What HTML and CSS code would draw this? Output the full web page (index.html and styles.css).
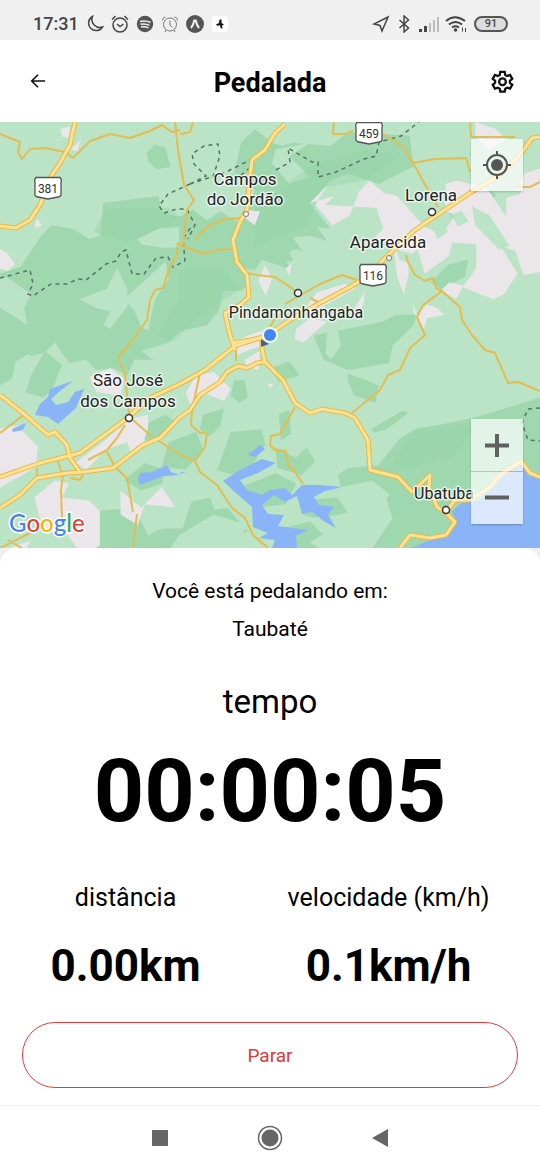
FILE: index.html
```html
<!DOCTYPE html>
<html lang="pt-BR">
<head>
<meta charset="utf-8">
<meta name="viewport" content="width=device-width, initial-scale=1">
<title>Pedalada</title>
<link rel="stylesheet" href="styles.css">
</head>
<body>
<div class="statusbar">
  <div class="status-group">
    <span class="clock">17:31</span>
    <svg class="st" viewBox="0 0 18 18"><path d="M6.500 1.500a7.500 7.500 0 1 0 10 10.500A8 8 0 0 1 6.500 1.500z"/></svg>
    <svg class="st" viewBox="0 0 18 18"><circle cx="9" cy="10" r="7"/><path d="M6 9l3 2.500L12.500 9M1 4.500L4.500 1M17 4.500L13.500 1"/></svg>
    <svg class="st" viewBox="0 0 18 18"><circle class="solid" cx="9" cy="9" r="8.200"/><path class="light" d="M4 6.500q5.500-1.500 10.500 1M4.500 9.300q4.500-1.200 9 1M5 12q4-1 7.500.800"/></svg>
    <svg class="st thin" viewBox="0 0 18 18"><circle cx="9" cy="9.500" r="6.500"/><path d="M9 5.500v4.500l2.500 2.500M1.500 5.500q0-3 3-3.500M16.500 5.500q0-3-3-3.500M5 15l-1 2M13 15l1 2"/></svg>
    <svg class="st" viewBox="0 0 18 18"><circle class="solid" cx="9" cy="9" r="9"/><path class="light bold" d="M5 13q2.500-3 3.200-7.500h1.600Q10.500 10 13 13"/></svg>
    <svg class="st" viewBox="0 0 18 18"><rect class="white" x="1" y="1" width="16" height="16" rx="4"/><path class="ink" d="M8.500 4.500l2 0 0 3.500 2.500 1.500-2 1 .500 3-1.500 0-1.500-3.500-2 1-1.500-1.500 3-1.500z"/></svg>
  </div>
  <div class="status-group right">
    <svg class="st" viewBox="0 0 18 18"><path d="M16 2L2 9l6 1.500L10 16z"/></svg>
    <svg class="st" viewBox="0 0 18 18"><path d="M4.500 5l9 8L9 17V1l4.500 4-9 8"/></svg>
    <svg class="bars" viewBox="0 0 22 18"><path class="dark" d="M1 14h3v3H1zM6 11h3v6H6z"/><path class="pale" d="M11 8h2v9h-2zM15 5h2v12h-2zM19 2h2v15h-2z"/></svg>
    <svg class="bars" viewBox="0 0 22 18"><path class="wave" d="M1 6q9-7.500 19 0M4 9.500q6.500-5 13 0M7 12.500q3.500-2.500 7 0"/><circle class="dark" cx="10.500" cy="15" r="1.800"/><path class="tick" d="M17.500 12.500v4M20.500 13v4"/></svg>
    <span class="battery">91</span>
  </div>
</div>

<header class="topbar">
  <button class="iconbtn" type="button" aria-label="Voltar"><svg viewBox="0 0 24 24"><path d="M20.500 12H4.500M12 4.500L4.500 12l7.500 7.500"/></svg></button>
  <h1>Pedalada</h1>
  <button class="iconbtn gear" type="button" aria-label="Configurações"><svg viewBox="0 0 24 24"><path d="M9.700 2h4.600l.600 3.200 1.900 1.100 3.100-1.100 2.300 4-2.500 2.100v2l2.500 2.200-2.300 3.900-3.100-1-1.900 1.100-.600 3H9.700l-.600-3-1.900-1.100-3.100 1-2.300-3.900 2.500-2.200v-2L1.800 9.200l2.300-4 3.100 1.100 1.900-1.100z"/><circle cx="12" cy="12.200" r="3.500"/></svg></button>
</header>

<section class="map" aria-label="Mapa">
  <svg class="canvas" viewBox="0 122 540 426" preserveAspectRatio="xMidYMid slice">
    <rect class="land" x="0" y="122" width="540" height="426"/>
    <g transform="translate(0 122) scale(.3444)">
      <g class="forest">
        <path d="M300 235L460 215 470 260 520 275 560 255 600 285 640 260 690 290 740 200 720 150 650 160 700 60 740 20 790 60 820 70 850 60 960 70 1010 30 1190 40 1200 130 1100 180 1010 150 960 170 900 235 960 310 920 305 950 345 900 330 850 335 880 380 870 400 830 405 850 430 760 400 740 430 700 425 725 470 700 490 650 490 635 550 600 590 520 610 490 640 410 665 445 690 390 690 370 735 330 715 280 720 250 690 200 700 160 640 130 670 90 680 60 620 0 635 0 540 50 570 80 590 70 540 90 500 20 450 0 455 0 440 60 420 120 330 150 300 210 310 260 340 290 330z"/>
        <path d="M425 90l25-25 30 10 15 55-40 8-25-25zM0 620l60 0 30 50-45 25-10 50-35 20zM130 665l50 40-30 75-25 20-50-15 15-50z"/>
        <path d="M910 620l200-40 40-20 60 0-10 30-60 60-10 50-120 20-70-30zM1010 730l40 15 50 20-10 50-60-20-20-40zM1080 890l90-52 15 8-60 45-40 12zM1250 465l50-50 60-15-10 50-70 35z"/>
        <path d="M785 715l55-20 30 40-60 20zM680 750l30 0 10 50-25 15-25-20zM590 850l60-18-10 50-30 30-30-18zM670 900l90-8 10 45-60 95-80-20zM810 850l30-15 5 70-30 20zM800 945l60 30 30-30 25 40-40 40-70-20z"/>
        <path d="M420 880l60-30 30 20-60 60-40-10zM490 930l80-30 20 50-50 60-70-10zM1010 1005l160-15-30 40-150 30-10-35zM700 1060l100-40 60 30-30 60-90 10-20-20z"/>
        <path d="M1160 920L1210 890 1300 875 1390 855 1568 800 1568 1060 1520 1020 1450 1060 1400 1130 1310 1150 1320 1210 1280 1250 1180 1278 950 1278 1010 1200 1060 1200 1130 1080 1080 1040 1080 1020z"/>
        <path d="M280 1130l110-10 40 80 60-30 30-60 90-20 20 60-110 50-40 60 110 18H260l-20-50zM360 1040l60-50 60 20-10 40-60 20zM600 1130l60-10 60 70-80 10zM700 1240l60 10 20 28H630zM870 1100l110-10 40 60-50 20-90-30zM820 1180l80-20 60 60-50 58H850zM180 1090l60 40-40 30-60-50zM1180 1278l10-40-90 10-20 30z"/>
        <path d="M1290 250l60-10 20 50-40 10zM1370 230l40-40 30 20-20 50z"/>
      </g>
      <g class="meadow">
        <path d="M400 340l60-30 60-5 0 60-50 0-60-10zM230 515l80-30 30-60 30 60 0 50-50 65-20-10 20-40-40-10-20-10zM360 515l120-110 10 50-40 60-20 90-20-10-20-50zM560 60l140 0-20 90-90 15zM800 80l100-20-60 40 60 60-60 20-50-60zM840 380q30-30 50 20l-20 40zM950 610l30-10 10 50-30 40-15-20z"/>
        <path d="M520 1200l100-60 100 30-50 70-80 10zM900 1150l90-10 130-50 20 60-60 90-120 20-60-40 50-30zM450 1180l30-90 80 0-30 90z"/>
      </g>
      <g class="deep">
        <path d="M520 430l140 0 30 60-130 90-60 60-40-20 60-110zM740 250l160-120 160-50 100 20-100 70-120 20-50 110-150 60zM310 250l180 0 40 30-160 70-100-30zM1200 900l180-20-60 90-200 50z"/>
      </g>
      <g class="town">
        <path d="M175 20l28-8-4 34-20-4zM205 80l30-30-10 35zM100 300l8-18 14 18-16 8zM0 370l20 10 24 32-20 20-24-6z"/>
        <path d="M900 235l50-50-35 55 50 60 50-28 28-70 30-32 40 35 40 10 80 90 50 20 40-55-30-10 0-80 30-10 90 20 60 90 0 30 50 50-10 20-60-20 50 80-40 60-30 15-90-35 40-55 0-70-70-5-10 40-70 50-20-70-30 20 4 50-14 60-20-50-10-90-40-20-30 10 40-40-20-60-150-10 30-25z"/>
        <path d="M1470 300l0-80 40-10 10-60 48-15v300l-48 10-30-90 -40-30zM1380 0l60 20 30 30-50 30-40-40zM1200 530l10 30 30-30 30 10 20 20-50 10-10 30-30-50zM1280 490l25-25 40 10-20 40z"/>
        <path d="M750 460l20-45 20 40-18 50zM830 425l16-15-4 40zM890 535l30-40 80-25 35 12-110 60-30 20zM670 640l90-35 10 40-80 30zM710 690l45-25-4 55-35-10zM860 600l40-30 50 10-70 60-25-10zM1030 540l30-50-5 40-10 20z"/>
        <path d="M540 785l30-50 50-10 50 50-20 35-50-20-50 30zM260 740l60-25 40 30-10 50-70-10zM380 860l50-10 0 40-20 60-30 10-10-30-60 20-60 60-30-20 90-70zM700 270l20-15 35 5-15 40zM775 760l20 0-10 12z"/>
        <path d="M0 890l50-8 60 60-5 60-105 60zM100 1090l60-50 40 10-20 40 80 10 30 30 0 100-50 30-50-70-60 0-20-60zM350 1070l60 50 60-60 40 60-90-10-20 60-50-30zM0 1245l90-30-40 60z"/>
      </g>
      <g class="land">
        <path d="M1310 270l30-12 20 30-30 15zM1370 245l50 25 60 90-30 10-70-70zM1250 290l40 0 10 30-30 20zM1150 370l40 10 0 30-30-10z"/>
      </g>
    </g>
    <g class="water">
      <path d="M540 477L528 472 519 461 499 480 480 500 462 503 452 511 456 522 447 535 430 540 412 548H540z"/>
      <path d="M260 445l5 4-10 8-7-2zM223 481L240 470 262 459 276 463 258 473 240 480 247 490 262 495 270 490 285 488 292 495 302 485 320 485 342 487 325 491 314 497 319 505 334 507 328 515 336 528 325 522 312 512 302 514 297 496 285 502 274 495 262 505 268 514 284 515 278 526 308 530 296 536 297 548H272l3-8-16-2 9-5-15-6-1-20-14-12z"/>
      <path d="M73 381L60 391 51 399 56 405 68 402 75 392 84 389 76 408 58 424 48 417 35 415 40 404 48 397 50 389zM12 429l14-6-3 7-10 2zM140 473l12-1 15-7 4 7 9 3-16 1-24 9-2-6zM181 472l5 0-6 2z"/>
    </g>
    <g class="border">
      <path d="M0 278l30-8 3 14-5 10 5 2 18-12 16 0 11-5 8 1 20-16 10-3 5-9 5-2 6 24 12 0 12-16 12-1 5 10 12-6-2-22 8-12"/>
      <path d="M190 184l-22 10-9 12 5 7 13-4 10 0 8 16-7 14M190 184l16-8-12-12 -2-10 12-8 14-2 2 12-7 20M190 184l36-12 28-14-2 8-12 10M276 170l14-8-2-14 24 14 6 0v15l18-5 28-13 12-3 3-14 22-6 18-14"/>
      <path d="M540 408l-12 1-6 14 6 17 12 1"/>
    </g>
    <g class="minor">
      <path d="M0 134L20 142 18 152 22 159 30 149 45 148 65 152 73 158 90 141 110 134 130 138 150 131 162 125 172 132 180 130M175 122L178 150 184 185 194 200 187 210 183 245M136 335L147 320 150 300 155 290 163 288 168 272 177 255 178 243 184 247 205 254 215 250 233 249M240 218L225 219 207 227 198 235 196 242M247 273L257 275 275 277 290 287 298 293M285 304L320 284 342 275 360 281M180 134l10-2 3-10M334 122l-1 12 12 0 8-3M310 298l12 6"/>
      <path d="M0 433L25 414M57 460L63 475 61 490 62 518M70 478l10 2 4-8M88 460L107 450 117 438 125 425M107 452L115 467 127 478 133 512M133 420L150 435 165 445 180 455M137 335L118 357 125 375 129 415M37 468v8M0 548l32-16M8 540l14 8"/>
      <path d="M352 413L380 390 388 375 400 370 410 348 425 335 417 317 423 305 442 291 460 307 462 320 472 335 485 350 495 353 508 383 518 382 540 391M406 255L408 262 415 275 425 281 433 278 436 288 442 291M295 407L285 425 280 434 271 436 270 445 275 450 286 451 288 465 295 472 303 484M200 373L192 410 191 425 200 433 207 433 205 447 195 461 180 455M195 461L200 472 217 485 232 508 245 518 253 535 268 548"/>
      <path d="M383 134L393 140 403 147 413 163 427 188 438 207M413 163L435 159 466 158 470 172M470 122L471 137 515 137M540 182L530 187 515 187M266 334l8-14 14-12M216 360l8-4M137 514l-4 34M236 361v-12"/>
    </g>
    <g class="major-edge">
      <path d="M75 122L70 145 60 163 50 178 40 205 30 220 16 228 0 226M285 124L275 133 265 150 252 160 249 185 247 210 240 222 233 240 237 262 247 275 249 297 240 305 225 313 230 335 235 350M232 343l30-5"/>
      <path d="M262 337v12l3 13L257 363 247 368 238 366 227 372 220 382 200 395 190 410 180 417 160 438 143 445 113 468 83 472 67 473 37 478 20 495 0 508M0 395L23 413 48 435 55 432 67 445 70 458 80 472"/>
      <path d="M265 362L283 380 295 403 310 413 322 409 345 413 355 418 368 440 370 470 398 477 412 492 430 475 429 487 437 507 446 513 455 522 446 535 430 538 410 535 400 548M446 512L455 500 470 500 490 487 500 475 521 461 530 473 540 477"/>
      <path d="M540 137L532 138 520 155 500 175 470 193 440 213 415 230 385 258 370 275 350 287 320 303 290 320 268 335 235 346 205 370 180 384 150 398 125 420 80 453 40 463 0 477"/>
    </g>
    <g class="major">
      <path d="M75 122L70 145 60 163 50 178 40 205 30 220 16 228 0 226M285 124L275 133 265 150 252 160 249 185 247 210 240 222 233 240 237 262 247 275 249 297 240 305 225 313 230 335 235 350M232 343l30-5"/>
      <path d="M262 337v12l3 13L257 363 247 368 238 366 227 372 220 382 200 395 190 410 180 417 160 438 143 445 113 468 83 472 67 473 37 478 20 495 0 508M0 395L23 413 48 435 55 432 67 445 70 458 80 472"/>
      <path d="M265 362L283 380 295 403 310 413 322 409 345 413 355 418 368 440 370 470 398 477 412 492 430 475 429 487 437 507 446 513 455 522 446 535 430 538 410 535 400 548M446 512L455 500 470 500 490 487 500 475 521 461 530 473 540 477"/>
      <path d="M540 137L532 138 520 155 500 175 470 193 440 213 415 230 385 258 370 275 350 287 320 303 290 320 268 335 235 346 205 370 180 384 150 398 125 420 80 453 40 463 0 477"/>
    </g>
    <g class="shield">
      <path d="M36 177.500h24q2 2 1 5v12q0 2-3 2.500l-10 2-10-2q-3-.500-3-2.500v-12q-1-3 1-5z"/><text x="48" y="193">381</text>
      <path d="M357 122.500h24q2 2 1 5v12q0 2-3 2.500l-10 2-10-2q-3-.500-3-2.500v-12q-1-3 1-5z"/><text x="369" y="138">459</text>
      <path d="M361 264.500h24q2 2 1 5v12q0 2-3 2.500l-10 2-10-2q-3-.500-3-2.500v-12q-1-3 1-5z"/><text x="373" y="280">116</text>
    </g>
    <g class="town-dot"><circle cx="246" cy="214" r="2.500"/><circle cx="389" cy="258" r="2.500"/></g>
    <g class="city-dot"><circle cx="298" cy="293" r="3.500"/><circle cx="432" cy="212" r="3.500"/><circle cx="129" cy="418" r="3.500"/><circle cx="446" cy="510" r="3.500"/></g>
    <g class="place">
      <text x="245" y="185">Campos</text><text x="245" y="205">do Jordão</text>
      <text x="431" y="201">Lorena</text><text x="388" y="248">Aparecida</text>
      <text class="long" x="296" y="318">Pindamonhangaba</text>
      <text x="128" y="386">São José</text><text x="128" y="407">dos Campos</text>
      <text class="long" x="444" y="499">Ubatuba</text>
    </g>
    <path class="heading" d="M261 339l8 5-8 3z"/>
    <circle class="halo" cx="270" cy="335" r="8"/><circle class="here" cx="270" cy="335" r="6"/>
    <text class="google" x="9" y="532"><tspan class="gb">G</tspan><tspan class="gr">o</tspan><tspan class="gy">o</tspan><tspan class="gb">g</tspan><tspan class="gg">l</tspan><tspan class="gr">e</tspan></text>
  </svg>
  <button class="mapbtn locate" type="button" aria-label="Minha localização"><svg viewBox="0 0 30 30"><circle class="ring" cx="15" cy="15" r="10"/><circle class="core" cx="15" cy="15" r="6"/><path class="ring" d="M15 1v5M15 24v5M1 15h5M24 15h5"/></svg></button>
  <div class="zoom">
    <button class="mapbtn" type="button" aria-label="Aumentar zoom"><svg viewBox="0 0 30 30"><path class="sign" d="M15 4v23M3 15.500h24"/></svg></button>
    <button class="mapbtn" type="button" aria-label="Diminuir zoom"><svg viewBox="0 0 30 30"><path class="sign" d="M3 14.500h24"/></svg></button>
  </div>
</section>

<main class="panel">
  <p class="where">Você está pedalando em:</p>
  <p class="where">Taubaté</p>
  <h2 class="caption">tempo</h2>
  <p class="timer">00:00:05</p>
  <dl class="stats">
    <div><dt>distância</dt><dd>0.00km</dd></div>
    <div><dt>velocidade (km/h)</dt><dd>0.1km/h</dd></div>
  </dl>
  <button class="stop" type="button">Parar</button>
</main>

<nav class="sysnav" aria-label="Sistema">
  <button type="button" aria-label="Recentes"><svg viewBox="0 0 26 26"><path d="M5 5h16v16H5z"/></svg></button>
  <button type="button" aria-label="Início"><svg viewBox="0 0 26 26"><circle cx="13" cy="13" r="8.500"/><circle class="outline" cx="13" cy="13" r="11.500"/></svg></button>
  <button type="button" aria-label="Voltar ao anterior"><svg viewBox="0 0 26 26"><path d="M5 13l16-9v18z"/></svg></button>
</nav>
</body>
</html>
```

FILE: styles.css
```css
* { box-sizing: border-box; }
body {
  margin: 0;
  min-height: 100vh;
  display: flex;
  flex-direction: column;
  background: #f0eff1;
  color: #000;
  font-family: Roboto, "Liberation Sans", sans-serif;
}
button { border: 0; padding: 0; background: none; font: inherit; color: inherit; }
svg { display: block; }
h1, h2, p, dl, dd { margin: 0; }

.statusbar {
  height: 40px;
  padding: 8px 32px 0 33px;
  display: flex;
  justify-content: space-between;
  align-items: center;
  background: #f0f0f0;
  color: #444;
}
.status-group { display: flex; align-items: center; gap: 7px; }
.status-group.right { gap: 5px; }
.clock { font-size: 18px; font-weight: 500; line-height: 20px; }
.st { width: 18px; height: 18px; fill: none; stroke: #444; stroke-width: 1.5; }
.status-group:not(.right) .clock + .st { margin-left: 0; }
.st.thin { stroke: #777; stroke-width: 1; }
.st .solid { fill: #555; stroke: none; }
.st .light { stroke: #f0f0f0; }
.st .bold { stroke-width: 2; }
.st .white { fill: #fff; stroke: none; }
.st .ink { fill: #111; stroke: none; }
.bars { width: 22px; height: 18px; }
.bars .dark { fill: #444; }
.bars .pale { fill: #bbb; }
.bars .wave { fill: none; stroke: #444; stroke-width: 2; }
.bars .tick { stroke: #444; }
.battery {
  width: 34px;
  margin-left: 2px;
  border: 2px solid #555;
  border-radius: 8px;
  background: #dcdcdc;
  font-size: 11px;
  font-weight: 500;
  line-height: 12px;
  text-align: center;
}

.topbar {
  height: 82px;
  padding: 0 26px;
  display: flex;
  justify-content: space-between;
  align-items: center;
  background: #fff;
}
.topbar h1 { padding-top: 4px; font-size: 27px; font-weight: 700; line-height: 32px; }
.iconbtn { width: 24px; display: grid; place-items: center; }
.iconbtn svg { width: 20px; height: 20px; fill: none; stroke: #111; stroke-width: 2; }
.gear svg { width: 23px; height: 23px; stroke-width: 2.4; }

.map { position: relative; flex: 1 0 426px; overflow: hidden; }
.canvas { position: absolute; inset: 0; width: 100%; height: 100%; }
.land { fill: #bbe3c6; }
.forest { fill: #9fd8af; }
.meadow { fill: #bbe3c6; }
.deep { fill: #93d1a6; opacity: .35; }
.town { fill: #ebe6e9; }
.water { fill: #8ab4f8; }
.border { fill: none; stroke: #557563; stroke-width: 1.5; stroke-dasharray: 4 4; }
.minor { fill: none; stroke: #e4bd50; stroke-width: 2; stroke-linejoin: round; }
.major-edge { fill: none; stroke: #e8b945; stroke-width: 5; stroke-linejoin: round; }
.major { fill: none; stroke: #fde293; stroke-width: 3; stroke-linejoin: round; }
.shield { fill: #fff; stroke: #555; stroke-width: 1.3; }
.shield text { fill: #333; stroke: none; font-size: 12px; text-anchor: middle; }
.town-dot { fill: #fff; stroke: #777; stroke-width: 1; }
.city-dot { fill: #fff; stroke: #333; stroke-width: 1.5; }
.place {
  font-size: 17px;
  text-anchor: middle;
  fill: #222;
  stroke: #fff;
  stroke-opacity: .7;
  stroke-width: 3;
  stroke-linejoin: round;
  paint-order: stroke;
}
.place .long { font-size: 16px; }
.heading { fill: #46658c; }
.halo { fill: #fff; opacity: .8; }
.here { fill: #4285f4; }
.google {
  font-family: Lato, sans-serif;
  font-size: 24px;
  font-weight: 500;
  stroke: #fff;
  stroke-width: 3;
  paint-order: stroke;
}
.gb { fill: #4285f4; }
.gr { fill: #db4437; }
.gy { fill: #f4b400; }
.gg { fill: #34a853; }

.mapbtn {
  width: 52px;
  height: 52px;
  display: grid;
  place-items: center;
  background: rgba(255, 255, 255, .7);
}
.mapbtn svg { width: 30px; height: 30px; }
.locate { position: absolute; top: 17px; right: 17px; box-shadow: 0 1px 2px rgba(0, 0, 0, .2); }
.zoom {
  position: absolute;
  right: 17px;
  bottom: 24px;
  display: grid;
  gap: 1px;
  border-radius: 2px;
  box-shadow: 0 1px 2px rgba(0, 0, 0, .25);
}
.ring { fill: none; stroke: #555; stroke-width: 2; }
.core { fill: #555; }
.sign { stroke: #606060; stroke-width: 4; }

.panel {
  padding: 24px 22px 17px;
  display: flex;
  flex-direction: column;
  background: #fff;
  border-radius: 16px 16px 0 0;
  text-align: center;
}
.where { font-size: 21px; line-height: 38px; }
.caption { margin-top: 32px; font-size: 33px; font-weight: 400; line-height: 44px; }
.timer { margin-top: 16px; font-size: 88px; font-weight: 700; line-height: 102px; }
.stats { margin-top: 40px; display: flex; justify-content: center; gap: 87px; }
.stats dt { font-size: 25px; line-height: 32px; }
.stats dd { margin-top: 26px; font-size: 44px; font-weight: 700; line-height: 52px; }
.stop {
  margin-top: 30px;
  height: 66px;
  border: 1px solid #e23b3b;
  border-radius: 33px;
  color: #d93a3a;
  font-size: 19px;
}

.sysnav {
  height: 65px;
  border-top: 1px solid #f0eef0;
  display: flex;
  justify-content: center;
  align-items: center;
  gap: 84px;
  background: #fff;
}
.sysnav svg { width: 26px; height: 26px; fill: #666; }
.sysnav .outline { fill: none; stroke: #666; stroke-width: 1.5; }
```
